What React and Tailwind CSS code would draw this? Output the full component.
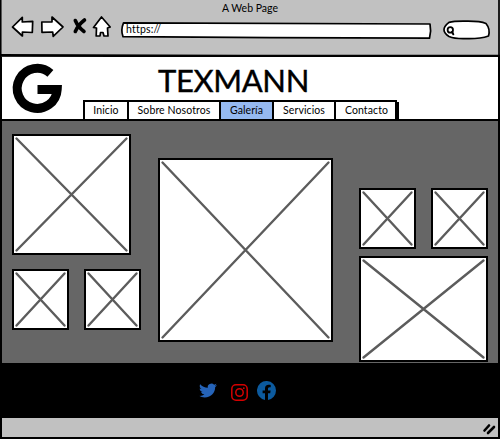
import React from "react";

const sketchFont = "font-['Lato','Noto_Sans',sans-serif]";

function Placeholder({ w, h, className = "" }) {
  return (
    <div className={`shrink-0 border-2 border-black bg-white ${className}`}>
      <svg className="block h-full w-full" viewBox={`0 0 ${w - 4} ${h - 4}`}>
        <path
          d={`M2.5 2.5L${w - 6.5} ${h - 6.5}M${w - 6.5} 2.5L2.5 ${h - 6.5}`}
          stroke="#5c5c5c"
          strokeWidth="2.4"
          strokeLinecap="round"
        />
      </svg>
    </div>
  );
}

function BrowserBar() {
  return (
    <div className="relative h-[57px] w-[500px] bg-[#c1c1c1]">
      <svg className="absolute inset-0" width="500" height="57" fill="white" stroke="black" strokeWidth="1.7" strokeLinejoin="round" strokeLinecap="round">
        <path d="M.7 0V57M499 0V57" />
        <path d="M12.5 27L22.3 17.3V22L32.7 21.3L32.3 32.5L22.4 32V36Z" />
        <path d="M41.8 22L52 21.8V17L63 27L53.2 36.3L52.7 32L42 32.4Z" />
        <path d="M75.3 20.5Q78 27 84 31.5M84.5 20Q78 25 75.3 31.5" fill="none" strokeWidth="3.6" />
        <path d="M101.5 17L93.5 27.5L96.5 28L96.2 36H100L100.5 32.5H103L104 36H108L107.5 28L110.2 27Z" />
        <path d="M123.5 22.8L430 24Q431.5 31 429.5 38.2L270 37.7L123 36.6Q120.5 30 123.5 22.8Z" />
        <path d="M449 22.4Q454 21 466 21.2Q480 21 486 23.5Q490.5 29 488.5 36Q480 39 466 38.6Q455 39 449 36.5Q439 30 449 22.4Z" />
        <circle cx="450.3" cy="29.9" r="2.7" strokeWidth="1.8" />
        <path d="M452.2 31.8L453.3 34.3" strokeWidth="2" />
        <path d="M0 55.4L240 56L500 56" strokeWidth="2.6" />
      </svg>
      <div className="relative flex h-[17px] items-center justify-center text-[10.5px] leading-none text-black">A Web Page</div>
      <div className="relative flex h-[25px] items-center pl-[126px] text-[10.5px] leading-none tracking-[0.2px] text-black">https://</div>
    </div>
  );
}

function Header() {
  return (
    <header className="flex h-[64px] border-b-2 border-black bg-white">
      <svg className="mt-[6px] ml-[10px] block shrink-0 overflow-visible" width="52" height="52" viewBox="0 0 52 52">
        <path d="M38.4 10.3A20 20 0 1 0 45.2 26.4H25.5" fill="none" stroke="black" strokeWidth="9" />
      </svg>
      <div className="ml-[19px] flex flex-col">
        <h1 className="mt-[3px] ml-[75px] flex h-[41px] items-center text-[31px] leading-none font-normal tracking-[-0.35px] text-black [-webkit-text-stroke:0.4px_black]">TEXMANN</h1>
        <nav className="flex h-[19px] w-[314px] border-t-2 border-r-2 border-l-2 border-black text-[10.5px] leading-none tracking-[0.1px] text-black shadow-[2px_2px_0_black]">
          <a className="flex w-[44px] items-center justify-center border-r-2 border-black">Inicio</a>
          <a className="flex w-[92px] items-center justify-center border-r-2 border-black">Sobre Nosotros</a>
          <a className="flex w-[53px] items-center justify-center border-r-2 border-black bg-[#95b9f0]">Galería</a>
          <a className="flex w-[62px] items-center justify-center border-r-2 border-black">Servicios</a>
          <a className="flex flex-1 items-center justify-center pl-[2px]">Contacto</a>
        </nav>
      </div>
    </header>
  );
}

function Social() {
  return (
    <footer className="flex h-[55px] bg-black pt-[17px] pl-[197px]">
      <svg className="mt-[2px] h-[17px] w-[18px]" viewBox="0 0 24 24" preserveAspectRatio="none" fill="#2563b8">
        <path d="M23.95 4.57a10 10 0 0 1-2.82.77 4.96 4.96 0 0 0 2.16-2.72c-.95.55-2 .95-3.13 1.18a4.92 4.92 0 0 0-8.38 4.48C7.69 8.1 4.07 6.13 1.64 3.16a4.82 4.82 0 0 0-.67 2.48c0 1.71.87 3.21 2.19 4.1a4.9 4.9 0 0 1-2.23-.62v.06a4.92 4.92 0 0 0 3.95 4.83 5 5 0 0 1-2.21.08 4.94 4.94 0 0 0 4.6 3.42A9.87 9.87 0 0 1 0 19.54a13.99 13.99 0 0 0 7.55 2.21c9.05 0 14-7.5 14-13.98 0-.21 0-.42-.02-.63a9.94 9.94 0 0 0 2.42-2.57Z" />
      </svg>
      <svg className="mt-[4px] ml-[14px] h-[17px] w-[17px]" viewBox="0 0 17 17" fill="none" stroke="#d50000" strokeWidth="1.5">
        <rect x=".8" y=".8" width="15.4" height="15.4" rx="4.2" />
        <circle cx="8.5" cy="8.5" r="3.7" />
        <circle cx="12.8" cy="4.2" r=".9" fill="#d50000" stroke="none" />
      </svg>
      <svg className="mt-[1px] ml-[9px] h-[19px] w-[19px]" viewBox="0 0 24 24" fill="#0c5a9e">
        <path d="M24 12a12 12 0 1 0-13.88 11.85v-8.38H7.08V12h3.04V9.36c0-3.01 1.79-4.67 4.53-4.67 1.32 0 2.7.24 2.7.24v2.95h-1.52c-1.49 0-1.95.93-1.95 1.88V12h3.32l-.53 3.47h-2.79v8.38A12 12 0 0 0 24 12Z" />
      </svg>
    </footer>
  );
}

export default function App() {
  return (
    <div className={`h-[439px] w-[501px] overflow-hidden bg-white ${sketchFont}`}>
      <BrowserBar />
      <div className="w-[500px] border-x-2 border-black">
        <Header />
        <main className="flex h-[242px] bg-[#666666]">
          <div className="ml-[10px] flex flex-col gap-[14px] pt-[13px]">
            <Placeholder w={119} h={121} className="h-[121px] w-[119px]" />
            <div className="flex gap-[15px]">
              <Placeholder w={57} h={61} className="h-[61px] w-[57px]" />
              <Placeholder w={57} h={61} className="h-[61px] w-[57px]" />
            </div>
          </div>
          <Placeholder w={175} h={184} className="mt-[37px] ml-[17px] h-[184px] w-[175px]" />
          <div className="ml-[26px] flex flex-col gap-[7px] pt-[67px]">
            <div className="flex gap-[15px]">
              <Placeholder w={57} h={61} className="h-[61px] w-[57px]" />
              <Placeholder w={57} h={61} className="h-[61px] w-[57px]" />
            </div>
            <Placeholder w={129} h={106} className="h-[106px] w-[129px]" />
          </div>
        </main>
        <Social />
        <div className="flex h-[21px] justify-end border-b-2 border-black bg-[#c1c1c1] pr-[1px]">
          <svg width="16" height="19" stroke="black" strokeWidth="2.6" strokeLinecap="round">
            <path d="M3.5 12.5L8 7.5M7 15L13 9" />
          </svg>
        </div>
      </div>
    </div>
  );
}
